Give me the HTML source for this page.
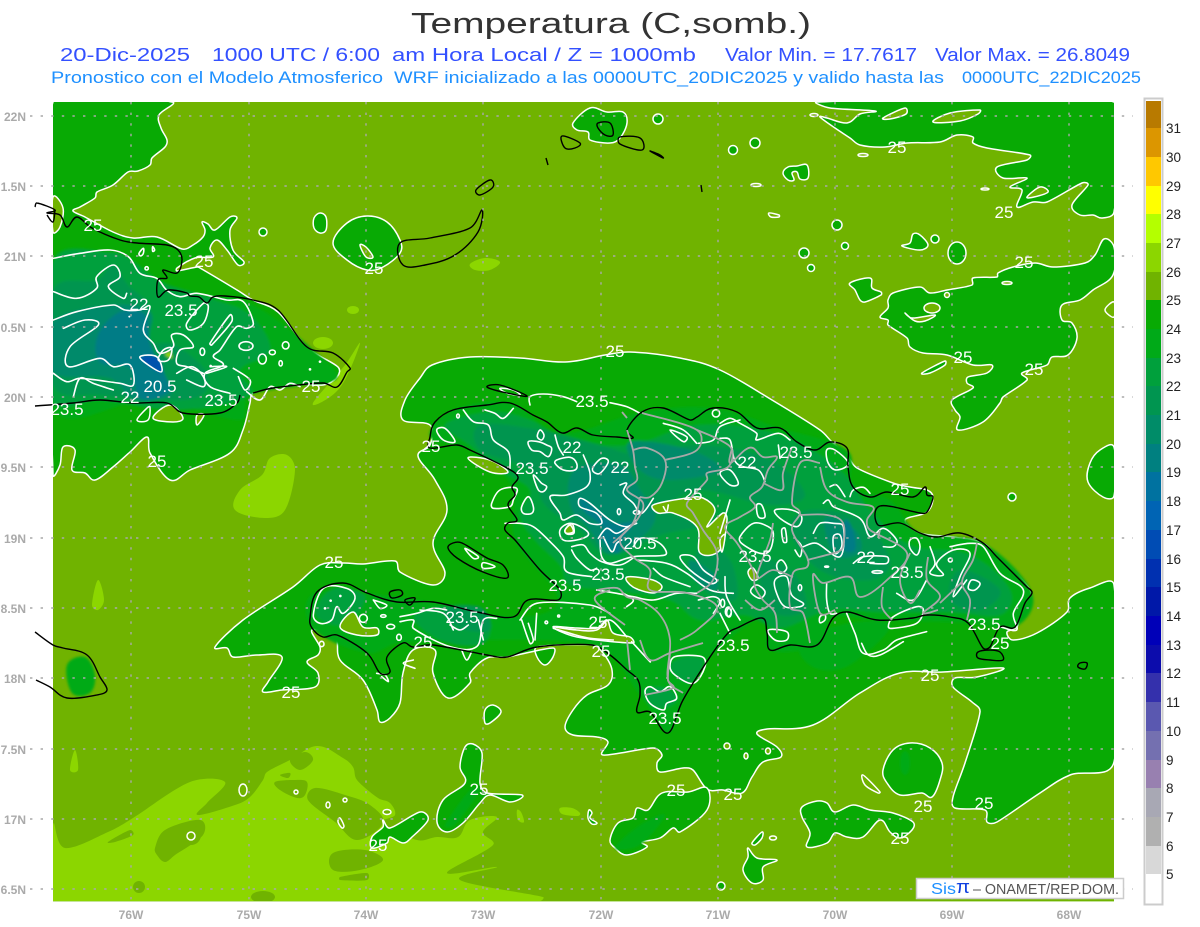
<!DOCTYPE html>
<html><head><meta charset="utf-8"><title>Temperatura</title>
<style>
html,body{margin:0;padding:0;background:#fff;width:1200px;height:927px;overflow:hidden}
svg{display:block;font-family:"Liberation Sans",sans-serif}
.w{fill:none;stroke:#fff;stroke-width:4.8;stroke-linejoin:round;stroke-linecap:round}
.ct polygon,.ct path,.ct ellipse,.ct circle{stroke:#fff;stroke-width:1.5;stroke-linejoin:round}
.k{fill:none;stroke:#000;stroke-width:1.4;stroke-linejoin:round}
.g{fill:none;stroke:#a8a8a8;stroke-width:1.8;stroke-linejoin:round}
.l text{fill:#fff;font-size:17px;text-anchor:middle}
.ax text{fill:#aaa;font-size:12px;font-weight:bold}
.cb text{fill:#222;font-size:13.5px}
</style></head><body>
<svg id="m" width="1200" height="927" viewBox="0 0 1200 927" xmlns="http://www.w3.org/2000/svg">
<defs>
<filter id="b" x="-5%" y="-5%" width="110%" height="110%"><feGaussianBlur stdDeviation="1.3"/></filter>
<clipPath id="mc"><rect x="53" y="102" width="1061" height="799"/></clipPath>
</defs>
<rect width="1200" height="927" fill="#fff"/>
<text x="411" y="33" font-size="29" fill="#333" textLength="400" lengthAdjust="spacingAndGlyphs">Temperatura (C,somb.)</text>
<g font-size="18" fill="#3350ff">
<text x="60" y="61" textLength="130" lengthAdjust="spacingAndGlyphs">20-Dic-2025</text>
<text x="212" y="61" textLength="168" lengthAdjust="spacingAndGlyphs">1000 UTC / 6:00</text>
<text x="392" y="61" textLength="304" lengthAdjust="spacingAndGlyphs">am Hora Local / Z = 1000mb</text>
<text x="725" y="61" textLength="192" lengthAdjust="spacingAndGlyphs">Valor Min. = 17.7617</text>
<text x="935" y="61" textLength="195" lengthAdjust="spacingAndGlyphs">Valor Max. = 26.8049</text>
</g>
<g font-size="16.5" fill="#1e90ff">
<text x="51" y="83" textLength="332" lengthAdjust="spacingAndGlyphs">Pronostico con el Modelo Atmosferico</text>
<text x="394" y="83" textLength="550" lengthAdjust="spacingAndGlyphs">WRF inicializado a las 0000UTC_20DIC2025 y valido hasta las</text>
<text x="962" y="83" textLength="179" lengthAdjust="spacingAndGlyphs">0000UTC_22DIC2025</text>
</g>

<!-- map -->
<rect x="53" y="102" width="1061" height="799" fill="#70b300"/>
<rect x="53" y="901" width="1061" height="1" fill="#c4e49a"/>

<g clip-path="url(#mc)">
<!-- light green -->
<g fill="#8cd600">
<polygon points="53,825 65,848 108,832 133,818 190,782 225,782 207,803 198,815 235,805 250,797 263,780 267,772 290,760 317,746 343,758 353,767 357,780 378,798 390,803 395,815 383,823 417,840 437,837 458,837 470,820 497,817 483,832 493,845 447,873 497,867 460,880 543,897 540,901 53,901"/>
<polygon points="235,510 240,490 262,475 270,458 287,455 295,470 285,510 265,518"/>
<polygon points="313,403 345,365 360,343 345,380 330,397"/>
<ellipse cx="323" cy="343" rx="10" ry="6"/>
<ellipse cx="353" cy="310" rx="6" ry="4"/>
<polygon points="470,264 485,258 500,262 490,270 475,270"/>
<polygon points="92,605 98,580 104,600 98,610"/>
<polygon points="70,770 75,750 78,770"/>
<polygon points="560,808 572,808 580,813 578,816 562,814"/>
<polygon points="517,810 521,812 524,822 518,820"/>
<polygon points="1065,282 1068,280 1070,283"/>
</g>
<g fill="#70b300">
<polygon points="108,842 130,830 133,835 115,842"/>
<polygon points="155,848 165,830 200,820 203,835 175,855 165,862 157,855"/>
<circle cx="191" cy="835" r="10"/>
<polygon points="275,782 295,780 307,782 305,795 297,798 280,790"/>
<polygon points="308,800 315,788 345,795 370,805 383,823 357,840 335,822"/>
<polygon points="333,853 365,850 383,860 360,870 333,870"/>
<polygon points="340,877 367,873 367,880 340,880"/>
<ellipse cx="263" cy="897" rx="12" ry="6"/>
<ellipse cx="139" cy="887" rx="6" ry="6"/>
<polygon points="290,760 305,752 313,760 300,770"/>
<polygon points="280,775 290,773 288,778"/>
</g>

<!-- 25 contour regions -->
<g class="ct" fill="#08aa04">
<polygon points="53,102 172,102 159,115 161,128 167,140 165,147 152,158 150,165 138,171 128,172 113,185 97,192 95,198 80,207 73,211 85,217 113,232 133,238 157,237 182,249 193,245 203,237 205,230 202,222 208,224 215,230 230,217 237,218 230,230 233,250 244,262 238,265 227,250 217,240 210,248 213,257 195,258 177,268 177,271 197,267 200,268 237,290 253,300 278,312 307,347 338,367 337,377 323,385 290,383 273,388 253,393 250,403 243,430 230,453 190,470 170,480 150,453 147,437 130,452 113,467 95,480 85,473 72,470 75,450 63,447 60,465 53,475"/>
<polygon points="403,420 405,400 420,378 432,365 470,357 520,358 565,362 605,355 630,352 680,358 720,370 772,400 820,430 832,442 848,457 857,468 893,483 910,487 927,490 933,497 927,512 905,520 920,533 953,537 983,543 997,557 1013,570 1030,590 1028,600 1022,610 1017,627 1007,632 1013,640 1037,633 1067,612 1070,598 1090,588 1114,585 1114,762 1070,775 1040,793 997,822 987,822 985,810 955,808 953,797 965,763 980,712 972,702 953,687 955,678 977,677 1003,668 943,672 900,673 860,693 813,725 767,729 757,734 777,747 781,757 763,762 752,777 742,793 723,790 707,789 693,770 683,768 660,772 657,763 662,755 653,748 603,755 608,742 597,737 573,735 565,727 573,710 587,695 608,685 612,670 603,653 592,645 537,647 537,657 545,665 553,657 553,648 507,657 487,658 470,673 470,683 448,698 433,673 435,650 413,650 403,673 400,703 390,718 380,722 377,710 363,680 340,660 335,637 312,630 320,647 318,655 307,662 318,673 315,687 282,690 263,692 268,682 282,657 257,655 233,657 227,648 215,647 243,620 293,587 320,565 343,563 363,564 395,561 400,572 433,585 445,573 433,543 447,510 435,480 418,456 430,445 430,425"/>
<polygon points="817,102 830,108 875,111 860,114 847,123 827,118 820,117 835,128 850,138 860,145 885,147 907,143 940,142 957,135 973,137 973,143 987,148 1030,155 1027,160 997,167 1003,178 1027,178 1010,187 1022,190 1017,207 1033,202 1047,202 1082,183 1088,185 1072,205 1080,215 1093,215 1102,218 1114,212 1114,102"/>
<polygon points="1013,267 998,273 997,277 973,278 972,285 947,290 930,293 920,287 893,293 888,300 888,308 880,317 888,320 888,325 907,338 910,347 923,353 947,355 973,365 992,365 987,373 968,377 967,383 973,388 952,400 955,410 960,417 958,430 983,422 1000,403 1003,397 1027,380 1022,373 1047,365 1052,357 1068,355 1077,338 1072,323 1062,320 1062,305 1080,300 1093,290 1113,275 1114,247 1104,239 1095,255 1085,263 1053,267 1035,263"/>
<polygon points="1114,447 1100,450 1090,463 1088,482 1103,497 1114,496"/>
<polygon points="333,243 347,223 367,216 387,222 400,240 400,253 383,267 367,270 347,260"/>
<polygon points="314,218 320,213 326,217 326,230 320,233 314,228"/>
<polygon points="573,123 590,108 607,112 623,112 627,123 620,138 610,143 590,140 588,132 577,130"/>
<polygon points="850,283 870,278 872,288 881,292 881,295 865,302 860,300 855,290"/>
<polygon points="883,770 893,750 910,743 930,748 942,763 940,780 932,797 922,793 900,795 887,783"/>
<polygon points="802,807 817,801 827,803 835,812 853,805 870,810 893,813 913,822 912,830 900,838 890,832 880,820 863,837 847,837 835,833 827,843 807,847 810,833 802,817"/>
<polygon points="610,840 618,823 633,818 637,808 648,810 662,793 688,792 707,788 707,810 680,832 673,828 660,838 642,842 647,847 627,855 615,848"/>
<polygon points="748,848 757,858 777,860 763,867 763,880 752,883 743,870 748,857"/>
<polygon points="473,744 482,753 480,783 487,793 522,795 510,802 490,795 480,803 463,823 447,832 437,822 443,800 465,783 460,767 465,747"/>
<polygon points="372,837 383,827 383,820 390,828 420,812 428,820 412,837 403,843 390,837 387,843 372,848"/>
<polygon points="485,710 493,705 501,712 490,723 485,723"/>
<polygon points="783,173 788,167 797,166 807,165 808,178 800,179 797,172 792,173 794,180 788,180"/>
<polygon points="913,234 920,235 928,245 920,250 902,246 910,243"/>
<ellipse cx="957" cy="253" rx="9" ry="11"/>
<circle cx="658" cy="119" r="5"/><circle cx="755" cy="143" r="5"/><circle cx="733" cy="150" r="4.5"/>
<circle cx="837" cy="225" r="5"/><circle cx="845" cy="246" r="3.5"/><circle cx="804" cy="253" r="5"/><circle cx="811" cy="268" r="3.5"/><circle cx="935" cy="239" r="4"/><circle cx="263" cy="232" r="4"/>
<polygon points="922,373 945,361 945,365 930,373"/>
<polygon points="752,843 762,832 762,838 755,845"/>
<circle cx="1012" cy="497" r="4"/>
<polygon points="589,810 592,813 590,818 597,823 592,824 588,818"/>
<circle cx="721" cy="886" r="4"/>
</g>
<g class="ct" fill="#70b300">
<polygon points="53,197 63,208 60,227 53,232"/>
<polygon points="1114,302 1105,310 1114,317"/>
<polygon points="933,122 950,113 980,110 978,114 960,121"/>
<polygon points="883,118 905,108 906,114 890,119"/>
<polygon points="1027,197 1040,187 1048,192 1034,197"/>
<polygon points="360,245 366,247 373,257 366,257"/>
<ellipse cx="1007" cy="283" rx="5" ry="1.5"/>
<ellipse cx="932" cy="308" rx="8" ry="5"/>
<polygon points="905,313 912,318 935,315 925,321 915,321"/>
<circle cx="947" cy="295" r="2.5"/>
<ellipse cx="863" cy="155" rx="5" ry="1.5"/>
<ellipse cx="814" cy="115" rx="4" ry="1.5"/>
<ellipse cx="756" cy="185" rx="5" ry="1.5"/>
<ellipse cx="985" cy="189" rx="4" ry="1"/>
<polygon points="769,213 779,215 779,217 771,217"/>
<polygon points="863,775 880,792 878,793 865,785"/>
<ellipse cx="773" cy="838" rx="3.5" ry="2"/>
<ellipse cx="727" cy="746" rx="3" ry="3"/><ellipse cx="746" cy="756" rx="2" ry="3"/><ellipse cx="768" cy="751" rx="2.5" ry="3"/>
<ellipse cx="191" cy="836" rx="4" ry="4"/><ellipse cx="243" cy="790" rx="4" ry="6"/>
<ellipse cx="345" cy="800" rx="2" ry="2"/><ellipse cx="328" cy="805" rx="2" ry="3"/>
<polygon points="340,818 344,826 342,828 338,822"/>
<ellipse cx="387" cy="812" rx="4" ry="2.5"/>
<ellipse cx="296" cy="792" rx="2" ry="2"/>
</g>

<!-- interior temperature levels -->
<g filter="url(#b)">
<g fill="#00aa18">
<polygon points="53,260 110,252 128,257 180,290 253,305 330,365 335,380 250,395 240,420 150,400 53,410"/>
<polygon points="430,437 453,410 510,403 562,433 642,412 713,408 780,428 847,450 853,487 890,500 920,533 983,543 1032,593 1015,627 968,623 877,620 833,618 817,645 770,650 762,618 710,657 683,700 668,733 640,695 592,645 400,643 367,653 312,628 317,592 433,602 513,617 558,600 515,540 512,487 470,450"/>
<polygon points="800,645 840,625 890,625 850,665 815,668"/>
<polygon points="67,665 85,657 95,675 90,693 72,693"/>
<polygon points="615,848 640,825 665,815 640,845"/><polygon points="445,825 470,790 480,790 455,825"/>
<ellipse cx="905" cy="763" rx="5" ry="12"/>
</g>
<g fill="#00a03c">
<polygon points="53,262 110,252 128,258 157,280 195,293 215,300 250,315 270,350 240,370 250,395 180,410 100,400 53,400"/>
<polygon points="445,425 490,412 530,420 570,440 630,445 700,425 780,435 840,470 870,510 910,545 970,555 1010,590 1000,615 950,612 880,612 830,610 780,628 745,615 700,620 670,600 610,590 570,585 560,565 535,540 520,515 530,490 500,470 470,445"/>
<polygon points="316,615 330,590 355,590 365,600 345,625"/>
<polygon points="415,615 470,605 490,625 480,645 440,640"/>
<polygon points="645,690 660,687 672,692 677,700 665,708 650,705"/>
<polygon points="670,665 685,657 703,660 700,672 690,683 675,675"/>
</g>
<g fill="#009550">
<polygon points="53,290 97,280 113,265 128,285 150,307 150,340 175,345 205,370 205,392 180,400 100,395 53,385"/>
<polygon points="480,425 540,430 600,445 640,455 700,445 770,460 805,495 770,505 700,490 665,510 700,525 660,535 610,555 580,530 545,505 530,470 480,450"/>
<polygon points="810,510 860,520 890,560 870,580 820,570 790,530"/>
<polygon points="760,560 795,575 805,610 770,610"/>
<polygon points="960,570 1000,590 980,610 950,600"/>
<polygon points="700,545 730,560 735,600 700,585"/>
<polygon points="445,610 480,607 490,630 460,628"/>
</g>
<g fill="#008a6a">
<polygon points="53,322 113,305 150,312 150,340 165,375 170,395 135,400 110,378 53,372"/>
<polygon points="575,470 620,465 640,490 655,520 625,550 605,552 590,530 570,505"/>
<polygon points="630,442 690,450 720,470 670,480 640,470"/>
<polygon points="825,518 855,530 860,552 835,555"/>
<polygon points="690,560 715,575 715,590 695,580"/>
</g>
<g fill="#007c86">
<polygon points="98,335 120,312 145,315 150,345 165,375 168,392 140,398 130,368 100,362"/>
<polygon points="580,498 593,507 613,523 633,523 622,540 617,553 600,537 603,527 583,510"/>
<polygon points="845,520 853,530 855,550 843,548"/>
</g>
<polygon fill="#0052ad" points="141,357 157,357 162,372 148,365"/>
<polygon fill="#8cd600" points="165,355 170,352 172,358"/>
</g>

<!-- olive patches inside land -->
<g class="ct" fill="#70b300">
<polygon points="653,505 687,498 703,498 715,510 707,527 723,513 727,520 720,550 700,553 697,527 673,513 658,513"/>
<polygon points="627,577 653,580 662,587 653,593 633,587"/>
<polygon points="553,627 577,628 597,628 607,620 613,633 630,637 633,643 577,637"/>
<polygon points="340,627 353,612 363,627 377,628 377,635 357,635"/>
<polygon points="468,458 490,460 508,472 490,472"/>
<polygon points="565,530 572,524 574,533 567,534"/>
<polygon points="753,568 758,578 752,580 748,572" />
<polygon points="720,540 725,535 722,552"/>
<polygon points="137,420 147,408 150,407 148,420" fill="#08aa04"/>
<polygon points="153,418 170,405 183,418 173,422"/>
<polygon points="197,415 204,415 197,425"/>
</g>

<!-- Cuba inner contours (zoom coords) -->
<g transform="translate(40 240) scale(.33333)">
<polyline class="w" points="40,55 120,40 210,30 265,50 300,100 350,115 380,150 420,170 470,160 560,180 610,185 640,250 620,265 590,260 540,330 520,350 550,375 495,400 510,440 570,460"/>
<polyline class="w" points="40,155 110,175 170,145 170,110 220,75 240,110 205,140 250,175 260,160"/>
<polyline class="w" points="40,240 110,215 220,195 255,210 300,210 330,200 310,270 340,310 360,340 400,320 395,285 430,285 460,320 420,330 410,370 440,380 490,400"/>
<polyline class="w" points="70,265 135,240 175,255 90,320 85,380 180,355 220,380 270,375 280,435 240,430 120,415 80,425 40,400"/>
<polygon class="w" points="300,350 350,350 365,395 325,375"/>
<polygon class="w" points="355,360 370,330 395,325 385,360"/>
<polyline class="w" points="410,400 455,380 490,410 490,440 440,420"/>
<polygon class="w" points="510,310 570,225 575,245 515,315"/>
<polygon class="w" points="440,250 490,190 505,200 490,250 450,270"/>
<polyline class="w" points="580,385 630,420 615,450 595,410"/>
<polyline class="w" points="510,380 560,380 500,400"/>
<ellipse class="w" cx="618" cy="318" rx="21" ry="13"/><ellipse class="w" cx="667" cy="357" rx="12" ry="15"/><ellipse class="w" cx="697" cy="337" rx="9" ry="7"/><ellipse class="w" cx="737" cy="316" rx="10" ry="11"/><ellipse class="w" cx="722" cy="370" rx="5" ry="8"/><ellipse class="w" cx="487" cy="335" rx="7" ry="11"/>
<polyline class="w" points="620,455 660,480 690,440 720,450 750,430 780,440"/>
<polyline class="w" points="100,470 120,415 160,430 220,450"/>
<circle cx="810" cy="388" r="4" fill="#fff"/><circle cx="840" cy="365" r="4" fill="#fff"/><circle cx="512" cy="378" r="4" fill="#fff"/><circle cx="268" cy="230" r="3" fill="#fff"/>
<polygon class="w" points="297,40 310,25 310,40 302,48"/><polygon class="w" points="338,20 344,30 338,34"/><circle class="w" cx="320" cy="85" r="5"/>
</g>

<!-- Haiti west peninsula inner contours -->
<g transform="translate(200 540) scale(.33333)">
<polygon class="w" points="340,225 370,145 440,145 465,175 430,220 410,200 395,240 360,250"/>
<polyline class="w" points="600,230 650,220 700,205 740,210"/>
<polyline class="w" points="600,245 640,240 640,265 750,320 830,320 850,240 890,235"/>
<polyline class="w" points="750,255 780,270 805,255"/>
<circle class="w" cx="490" cy="235" r="12"/>
<polyline class="w" points="960,240 1010,190 1170,195 1230,220"/>
<polyline class="w" points="965,240 990,310 1000,300 985,250"/>
<polyline class="w" points="1060,265 1110,280 1170,295 1240,300"/>
<ellipse class="w" cx="572" cy="260" rx="12" ry="7"/><ellipse class="w" cx="597" cy="292" rx="7" ry="9"/><ellipse class="w" cx="550" cy="228" rx="8" ry="4"/>
<polyline class="w" points="520,180 560,195 540,205 520,180"/>
<circle class="w" cx="1039" cy="247" r="4"/><circle class="w" cx="1076" cy="228" r="3"/>
<polyline class="w" points="530,400 555,405 565,425 545,410"/>
<circle cx="375" cy="205" r="4" fill="#fff"/><circle cx="392" cy="182" r="4" fill="#fff"/><circle cx="421" cy="168" r="4" fill="#fff"/>
<polyline class="w" points="640,360 610,370 645,385"/>
<ellipse class="w" cx="365" cy="312" rx="7" ry="8"/>
<polyline class="w" points="785,330 800,360 815,335"/>
</g>

<!-- Hispaniola west inner -->
<g transform="translate(420 380) scale(.33333)">
<polyline class="w" points="330,75 330,50 370,42 430,50 470,65"/>
<polyline class="w" points="570,68 620,80 660,100"/>
<polyline class="w" points="130,90 160,125 205,135 220,180 265,215 270,265"/>
<polyline class="w" points="195,90 225,100 250,115 280,85"/>
<polygon class="w" points="50,150 75,145 105,185 70,180"/>
<polygon class="w" points="360,150 372,165 365,180 352,170"/>
<polygon class="w" points="325,185 355,185 380,195 395,205 385,230 360,215 335,210"/>
<polyline class="w" points="405,165 415,200 430,225"/>
<polygon class="w" points="410,240 450,232 470,250 465,270 430,270 405,250"/>
<polygon class="w" points="520,260 545,235 565,245 540,280 520,275"/>
<polygon class="w" points="215,370 240,330 290,325 280,360 270,380 220,385"/>
<polygon class="w" points="305,380 325,350 340,380 335,400 310,400"/>
<polygon class="w" points="340,285 365,310 380,320 370,335 355,330"/>
<polyline class="w" points="490,225 510,280 500,320 440,345 390,350 420,400 430,420 470,405 510,430 545,430 530,400 480,380 480,355 510,370 570,420 620,440 650,420"/>
<polyline class="w" points="600,315 620,310 610,340 640,370 665,400 700,355"/>
<polygon class="w" points="420,450 450,430 490,445 505,465 470,480 430,480"/>
<polygon class="w" points="435,450 450,435 460,455 440,460"/>
<polyline class="w" points="255,430 300,430 340,440 385,480 430,530 440,575 515,590"/>
<polyline class="w" points="455,500 490,495 510,520 545,545 600,555 645,530"/>
<polyline class="w" points="455,510 470,535 510,570 530,565"/>
<polyline class="w" points="535,475 560,445 590,460 625,440 650,430"/>
<polyline class="w" points="550,470 575,515 590,490 605,480"/>
<polyline class="w" points="540,480 545,530 570,550 640,530 735,525 730,500 700,480 660,475 640,500"/>
<polygon class="w" points="780,530 820,530 850,570 890,600 870,610 810,570"/>
<polyline class="w" points="650,540 740,550 800,580 870,630 940,640"/>
<polyline class="w" points="700,565 730,590 810,620"/>
<polyline class="w" points="530,630 590,640 640,650 700,660 770,640 830,640"/>
<polyline class="w" points="610,640 640,660 620,680"/>
<polyline class="w" points="0,690 70,700 100,750"/>
<polyline class="w" points="175,720 190,780"/>
<polyline class="w" points="350,700 345,780"/>
<polyline class="w" points="730,130 790,150 830,190"/>
<polygon class="w" points="750,150 790,185 800,170"/>
<polyline class="w" points="835,190 880,180 900,140 960,120"/>
<ellipse class="w" cx="888" cy="100" rx="11" ry="11"/>
<polyline class="w" points="730,380 740,395 745,375"/>
<ellipse class="w" cx="597" cy="395" rx="5" ry="9"/>
<ellipse class="w" cx="650" cy="397" rx="10" ry="6"/>
<ellipse class="w" cx="925" cy="695" rx="9" ry="14"/>
<polyline class="w" points="835,660 880,650 900,665 880,700"/>
<polygon class="w" points="135,505 175,530 160,535"/>
<polygon class="w" points="190,548 225,560 190,565"/>
<polygon class="w" points="240,25 280,30 300,45 262,40"/>
<ellipse class="w" cx="114" cy="108" rx="4" ry="6"/>
<polyline class="w" points="400,740 470,750 530,750 570,720 620,770"/>
</g>

<!-- Hispaniola east inner -->
<g transform="translate(720 400) scale(.33333)">
<polyline class="w" points="0,70 30,55 60,70 110,100 110,120 175,100 210,120"/>
<polyline class="w" points="175,135 180,175"/>
<polygon class="w" points="320,150 345,150 385,190 350,210 325,190"/>
<polyline class="w" points="0,115 30,120 50,190 115,210 135,245"/>
<polygon class="w" points="0,220 30,210 55,250 30,255"/>
<polygon class="w" points="110,315 125,315 135,350 115,350"/>
<polygon class="w" points="165,330 215,330 245,350 230,380 180,355"/>
<polyline class="w" points="310,310 325,300 340,320 420,355 450,410 490,385 530,420 520,440 490,440"/>
<polyline class="w" points="280,400 300,370 340,370 370,380 360,470 290,430 250,440"/>
<polygon class="w" points="340,410 360,405 365,440 345,460"/>
<polygon class="w" points="100,370 145,380 160,400 150,450 120,460 65,430 60,410"/>
<polyline class="w" points="0,400 15,350 30,300"/>
<polygon class="w" points="185,390 195,385 200,425 190,425"/>
<polyline class="w" points="230,420 245,440 240,470 225,450"/>
<polygon class="w" points="170,495 185,480 200,505 180,520"/>
<polygon class="w" points="165,540 200,530 215,585 250,610 240,620 195,620 170,580"/>
<ellipse class="w" cx="240" cy="563" rx="5" ry="9"/>
<ellipse class="w" cx="320" cy="500" rx="6" ry="2"/>
<ellipse class="w" cx="472" cy="516" rx="16" ry="4"/>
<polyline class="w" points="400,490 430,470 500,470 500,490 450,490"/>
<polyline class="w" points="320,550 320,600 330,640 350,640"/>
<polygon class="w" points="570,420 590,415 600,440 590,465 570,445"/>
<polyline class="w" points="630,440 645,490 630,520 670,525 650,490 700,450 750,460 720,530 700,590 740,540"/>
<polygon class="w" points="755,540 780,550 765,570 745,565"/>
<ellipse class="w" cx="691" cy="480" rx="6" ry="6"/>
<polygon class="w" points="505,680 520,650 590,620 610,630 590,670 520,685"/>
<polyline class="w" points="380,640 405,700 430,760 490,750 530,720 620,695"/>
<polyline class="w" points="390,290 400,270 430,262 450,280"/>
<polyline class="w" points="330,260 350,255 375,290"/>
<polyline class="w" points="690,440 750,430 790,440 840,520 910,570 880,640 890,690 840,680"/>
<polyline class="w" points="15,530 20,590 60,660"/>
<ellipse class="w" cx="8" cy="610" rx="6" ry="12"/>
<ellipse class="w" cx="27" cy="638" rx="7" ry="13"/>
<polygon class="w" points="145,690 200,695 200,720 165,720"/>
<polygon class="w" points="300,650 315,645 315,660 300,668"/>
<polyline class="w" points="530,580 580,600 620,540"/>
<polyline class="w" points="0,640 30,700"/>
<polygon class="w" points="92,575 110,555 135,575 120,595" fill="#70b300"/>
</g>
<g transform="translate(560 640) scale(.33333)">
<polygon class="w" points="255,155 270,140 300,155 330,140 350,175 320,190 310,210 270,190"/>
<polygon class="w" points="330,80 345,50 425,50 435,80 400,130 345,105"/>
<polyline class="w" points="215,5 270,65 260,50"/>
<polyline class="w" points="905,10 925,45 960,45 1030,5"/>
</g>
</g>

<!-- coast -->
<g>
<polygon class="k" points="430,437 435,422 453,410 487,405 510,403 533,415 547,422 562,433 577,428 593,435 617,437 633,438 627,430 642,412 663,408 690,420 697,417 713,408 737,412 757,428 780,428 797,442 815,450 830,442 847,448 848,467 853,487 870,497 887,492 913,497 925,487 927,495 933,497 927,512 920,513 880,506 878,525 900,523 920,533 937,537 960,533 983,543 997,557 1027,587 1032,593 1025,603 1015,627 1000,627 990,647 983,648 968,623 950,617 927,615 913,618 877,620 848,612 833,618 817,645 790,645 770,650 767,633 762,618 737,628 728,633 710,657 683,700 668,733 650,712 637,712 640,695 638,680 627,670 610,655 592,645 537,647 507,657 487,655 433,645 413,647 403,643 387,657 390,672 380,673 367,653 337,635 323,637 312,628 310,618 317,592 343,583 367,593 397,602 433,602 477,612 513,617 528,600 558,600 560,590 540,570 515,540 505,530 508,523 517,520 508,505 515,495 512,487 518,477 507,468 470,450 457,445 430,448" stroke-width="1.5"/>
<polygon class="k" points="448,548 453,543 462,543 487,558 503,565 507,578 483,572 457,558"/>
<polygon class="k" points="487,387 500,385 527,396 507,393"/>
<polygon class="k" points="978,652 990,650 1000,652 1003,660 990,660 978,658"/>
<polyline class="k" points="35,406 73,403 100,400 133,403 167,403 183,413 220,413 237,403 240,395"/>
<polyline class="k" points="253,393 273,388 323,383 337,387 347,372 350,368 333,353 307,347 278,310 253,300 225,296 213,297 207,303 199,297 190,296 187,293 168,290 158,297 158,280 167,278 163,270 177,273 182,260 178,250 167,245 137,243 120,240 92,228 77,217 67,227 60,215 47,213 55,210 37,203 35,207"/>
<polyline class="k" points="47,215 53,222 55,210"/>
<polyline class="k" points="35,632 53,645 63,648 87,655 100,677 107,690 97,695 67,698 50,687 36,680"/>
<polygon class="k" points="598,123 610,123 613,135 605,135 598,128"/>
<polygon class="k" points="562,136 580,143 575,148 565,148"/>
<polygon class="k" points="620,137 640,138 642,150 620,144"/>
<polygon class="k" points="650,151 663,158 660,155"/>
<polyline class="k" points="546,158 548,165"/>
<polyline class="k" points="701,185 702,192"/>
<polygon class="k" points="476,190 490,180 493,187 480,195"/>
<polygon class="k" points="482,210 478,232 455,255 425,265 403,265 400,243 430,238 470,228"/>
<polygon class="k" points="1080,663 1087,663 1085,669 1078,667"/>
<polygon class="k" points="390,592 400,590 402,595 392,598"/>
<polygon class="k" points="405,600 415,598 410,605"/>
</g>

<!-- province lines -->
<g class="g">
<polyline points="627,430 633,450 635,467 637,480 627,490 643,503 637,520 620,540 633,557 650,570 650,590 687,593 717,607 697,630 680,640"/>
<polyline points="633,450 647,448 665,460 662,483 650,497 640,497"/>
<polyline points="665,460 697,450 697,430 642,413"/>
<polyline points="697,430 720,440 732,450 728,467 707,473 707,480 687,503 693,513 703,530 717,553 713,580 697,593"/>
<polyline points="732,448 730,463 745,450 753,448 763,457 777,457 768,470 762,487 750,497 755,507 740,517 725,527 737,543 753,570 755,587 763,600 775,613 777,633"/>
<polyline points="792,447 783,473 782,490 763,483"/>
<polyline points="820,463 800,463 792,503 800,513 792,530 807,557 807,567 793,573 790,607 803,613 810,643"/>
<polyline points="820,467 827,490 847,502 873,507 867,520 870,530 907,553 887,580 860,597 850,577 823,583 813,575 820,613 835,610"/>
<polyline points="800,515 827,515 843,523 843,547 837,552 807,560"/>
<polyline points="883,587 882,607 892,620"/>
<polyline points="928,557 927,580 940,597 923,613 938,610"/>
<polyline points="977,543 973,560 962,582 970,600 967,620"/>
<polyline points="962,582 940,603"/>
<polyline points="880,530 878,538"/>
<polyline points="773,523 770,540 757,577 773,570 793,577"/>
<polyline points="910,553 900,580 910,603 920,590"/>
<polyline points="640,497 633,523 613,543"/>
<polyline points="597,590 617,588 627,597 640,600 660,615 670,640 668,680 683,693"/>
<polyline points="627,640 630,670"/>
<polyline points="640,640 650,660 670,653 703,643"/>
<polyline points="670,653 668,680 673,688 645,695"/>
<polyline points="622,412 627,418"/>
<polyline points="745,600 760,610 775,600"/>
<polyline points="610,590 595,600 625,625"/>
</g>

<!-- grid -->
<g stroke="#a9a9a9" stroke-width="1.4" stroke-dasharray="2.4 8.2" fill="none">
<path d="M30 116H1133M30 186H1133M30 256H1133M30 327H1133M30 397H1133M30 467H1133M30 538H1133M30 608H1133M30 678H1133M30 749H1133M30 819H1133M30 889H1133"/>
<path d="M131 102V906M249 102V906M366 102V906M483 102V906M601 102V906M718 102V906M835 102V906M952 102V906M1069 102V906"/>
</g>

<!-- contour labels -->
<g class="l">
<text x="93" y="231">25</text><text x="204" y="267">25</text><text x="374" y="274">25</text><text x="157" y="467">25</text><text x="311" y="392">25</text><text x="615" y="357">25</text><text x="897" y="153">25</text><text x="1004" y="218">25</text><text x="1024" y="268">25</text><text x="963" y="363">25</text><text x="1034" y="375">25</text><text x="431" y="452">25</text><text x="900" y="495">25</text><text x="693" y="500">25</text><text x="334" y="568">25</text><text x="598" y="628">25</text><text x="601" y="657">25</text><text x="291" y="698">25</text><text x="930" y="681">25</text><text x="1000" y="649">25</text><text x="423" y="648">25</text><text x="479" y="795">25</text><text x="676" y="796">25</text><text x="733" y="800">25</text><text x="378" y="851">25</text><text x="923" y="812">25</text><text x="900" y="844">25</text><text x="984" y="809">25</text>
<text x="67" y="415">23.5</text><text x="181" y="316">23.5</text><text x="221" y="406">23.5</text><text x="592" y="407">23.5</text><text x="796" y="458">23.5</text><text x="532" y="474">23.5</text><text x="755" y="562">23.5</text><text x="907" y="578">23.5</text><text x="565" y="591">23.5</text><text x="608" y="580">23.5</text><text x="462" y="623">23.5</text><text x="733" y="651">23.5</text><text x="665" y="724">23.5</text><text x="984" y="630">23.5</text>
<text x="139" y="310">22</text><text x="130" y="403">22</text><text x="572" y="453">22</text><text x="620" y="473">22</text><text x="747" y="468">22</text><text x="866" y="563">22</text>
<text x="160" y="392">20.5</text><text x="640" y="549">20.5</text>
</g>

<!-- axes -->
<g class="ax" text-anchor="end">
<text x="26" y="121">22N</text><text x="26" y="191">1.5N</text><text x="26" y="261">21N</text><text x="26" y="332">0.5N</text><text x="26" y="402">20N</text><text x="26" y="472">9.5N</text><text x="26" y="543">19N</text><text x="26" y="613">8.5N</text><text x="26" y="683">18N</text><text x="26" y="754">7.5N</text><text x="26" y="824">17N</text><text x="26" y="894">6.5N</text>
</g>
<g class="ax" text-anchor="middle">
<text x="131" y="919">76W</text><text x="249" y="919">75W</text><text x="366" y="919">74W</text><text x="483" y="919">73W</text><text x="601" y="919">72W</text><text x="718" y="919">71W</text><text x="835" y="919">70W</text><text x="952" y="919">69W</text><text x="1069" y="919">68W</text>
</g>

<!-- logo box -->
<rect x="916.5" y="878.5" width="207" height="20" fill="#fff" stroke="#ccc" stroke-width="1.5"/>
<text x="931" y="894" font-size="15.5" fill="#1e90ff" textLength="25" lengthAdjust="spacingAndGlyphs">Sis</text>
<text x="956" y="893" font-size="18" fill="#1040e0" textLength="14" lengthAdjust="spacingAndGlyphs">π</text>
<text x="973" y="894" font-size="15" fill="#555" textLength="146" lengthAdjust="spacingAndGlyphs">– ONAMET/REP.DOM.</text>

<!-- colorbar -->
<rect x="1144.5" y="98.5" width="18" height="806" fill="#fff" stroke="#ccc" stroke-width="2"/>
<g>
<rect x="1146" y="101" width="15" height="27" fill="#b87a00"/>
<rect x="1146" y="128" width="15" height="29" fill="#dc9600"/>
<rect x="1146" y="157" width="15" height="29" fill="#ffc800"/>
<rect x="1146" y="186" width="15" height="28" fill="#ffff00"/>
<rect x="1146" y="214" width="15" height="29" fill="#b4ff00"/>
<rect x="1146" y="243" width="15" height="29" fill="#8cd600"/>
<rect x="1146" y="272" width="15" height="28" fill="#70b300"/>
<rect x="1146" y="300" width="15" height="29" fill="#08aa04"/>
<rect x="1146" y="329" width="15" height="29" fill="#00aa18"/>
<rect x="1146" y="358" width="15" height="28" fill="#00a03c"/>
<rect x="1146" y="386" width="15" height="29" fill="#009550"/>
<rect x="1146" y="415" width="15" height="29" fill="#008c68"/>
<rect x="1146" y="444" width="15" height="28" fill="#008080"/>
<rect x="1146" y="472" width="15" height="29" fill="#0072a0"/>
<rect x="1146" y="501" width="15" height="29" fill="#0064b4"/>
<rect x="1146" y="530" width="15" height="29" fill="#004cb4"/>
<rect x="1146" y="559" width="15" height="28" fill="#0030b0"/>
<rect x="1146" y="587" width="15" height="29" fill="#0018a8"/>
<rect x="1146" y="616" width="15" height="29" fill="#0000b8"/>
<rect x="1146" y="645" width="15" height="28" fill="#0c0cac"/>
<rect x="1146" y="673" width="15" height="29" fill="#3430ac"/>
<rect x="1146" y="702" width="15" height="29" fill="#5a58b0"/>
<rect x="1146" y="731" width="15" height="29" fill="#7470b0"/>
<rect x="1146" y="760" width="15" height="28" fill="#9880b0"/>
<rect x="1146" y="788" width="15" height="29" fill="#a8a8b4"/>
<rect x="1146" y="817" width="15" height="29" fill="#b0b0b0"/>
<rect x="1146" y="846" width="15" height="28" fill="#d8d8d8"/>
<rect x="1146" y="874" width="15" height="29" fill="#fff"/>
</g>
<g class="cb">
<text x="1166" y="133">31</text><text x="1166" y="162">30</text><text x="1166" y="191">29</text><text x="1166" y="219">28</text><text x="1166" y="248">27</text><text x="1166" y="277">26</text><text x="1166" y="305">25</text><text x="1166" y="334">24</text><text x="1166" y="363">23</text><text x="1166" y="391">22</text><text x="1166" y="420">21</text><text x="1166" y="449">20</text><text x="1166" y="477">19</text><text x="1166" y="506">18</text><text x="1166" y="535">17</text><text x="1166" y="564">16</text><text x="1166" y="592">15</text><text x="1166" y="621">14</text><text x="1166" y="650">13</text><text x="1166" y="678">12</text><text x="1166" y="707">11</text><text x="1166" y="736">10</text><text x="1166" y="765">9</text><text x="1166" y="793">8</text><text x="1166" y="822">7</text><text x="1166" y="851">6</text><text x="1166" y="879">5</text>
</g>
</svg>
<script>
(function(){
var svg=document.getElementById('m');
var els=svg.querySelectorAll('polygon,polyline');
for(var n=0;n<els.length;n++){
 var el=els[n],closed=el.tagName.toLowerCase()==='polygon';
 var v=(el.getAttribute('points')||'').trim().split(/[\s,]+/).map(Number),p=[];
 for(var i=0;i+1<v.length;i+=2)p.push([v[i],v[i+1]]);
 var m=p.length;if(m<3)continue;
 var g=function(i){return closed?p[(i+m)%m]:p[Math.max(0,Math.min(m-1,i))];};
 var d='M'+p[0][0]+' '+p[0][1],last=closed?m:m-1,t=5.5;
 for(var j=0;j<last;j++){
  var a=g(j-1),b=g(j),c=g(j+1),e=g(j+2);
  var L=Math.hypot(c[0]-b[0],c[1]-b[1]);
  var la=Math.hypot(c[0]-a[0],c[1]-a[1])||1,le=Math.hypot(e[0]-b[0],e[1]-b[1])||1;
  var s1=Math.min(1/t,L/la/2.5),s2=Math.min(1/t,L/le/2.5);
  d+='C'+(b[0]+(c[0]-a[0])*s1).toFixed(1)+' '+(b[1]+(c[1]-a[1])*s1).toFixed(1)+' '+(c[0]-(e[0]-b[0])*s2).toFixed(1)+' '+(c[1]-(e[1]-b[1])*s2).toFixed(1)+' '+c[0]+' '+c[1];
 }
 if(closed)d+='Z';
 var q=document.createElementNS('http://www.w3.org/2000/svg','path');
 for(var k=0;k<el.attributes.length;k++){var at=el.attributes[k];if(at.name!=='points')q.setAttribute(at.name,at.value);}
 q.setAttribute('d',d);
 el.parentNode.replaceChild(q,el);
}
})();
</script>
</body></html>
